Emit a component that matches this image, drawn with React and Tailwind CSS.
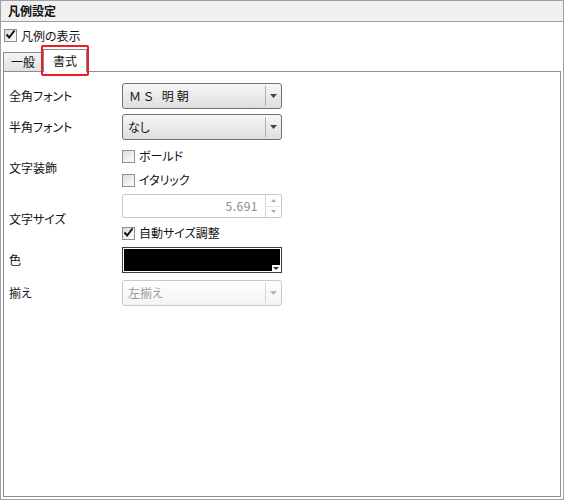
import React from 'react';

const Arrow = ({ color = '#444' }) => (
  <svg width="7" height="4" viewBox="0 0 7 4"><path d="M0 0H7L3.5 4Z" fill={color} /></svg>
);

const Check = ({ checked, label }) => (
  <div className="flex items-center h-[20px]">
    <span className="relative w-[13px] h-[13px] border border-[#8e8f8f] bg-linear-to-br from-[#dcdcdc] to-white flex items-center justify-center">
      {checked && (
        <svg width="11" height="11" viewBox="0 0 11 11" className="absolute -top-px left-0">
          <path d="M1.5 5.5L4.2 8.5L9.5 1.5" fill="none" stroke="#111" strokeWidth="2" />
        </svg>
      )}
    </span>
    <span className="ml-[4px]">{label}</span>
  </div>
);

const Select = ({ value, disabled, wide }) => (
  <div className={`w-[160px] h-[26px] rounded-[3px] border flex bg-linear-to-b ${disabled ? 'border-[#c9c9c9] from-white to-[#f4f4f4] text-[#9a9a9a]' : 'border-[#707070] from-[#f7f7f7] to-[#dedede]'}`}>
    <div className={`flex-1 flex items-center pl-[5px] ${wide ? 'tracking-[3px] pl-[6px]' : ''}`}>{value}</div>
    <div className={`w-[16px] my-[2px] border-l flex items-center justify-center ${disabled ? 'border-[#d6d6d6]' : 'border-[#b0b0b0]'}`}>
      <Arrow color={disabled ? '#b5b5b5' : '#444'} />
    </div>
  </div>
);

const Row = ({ label, children, className = '' }) => (
  <div className={`flex items-center ${className}`}>
    <div className="w-[113px]">{label}</div>
    <div>{children}</div>
  </div>
);

export default function App() {
  return (
    <div className="w-[564px] h-[500px] flex flex-col border border-[#a0a0a0] bg-white text-[12px] text-[#111] font-['Noto_Sans_CJK_JP',sans-serif] [font-feature-settings:'palt']">
      <div className="h-[21px] shrink-0 bg-[#f0f0f0] border-b border-[#a0a0a0] pl-[7px] font-bold leading-[20px]">凡例設定</div>

      <div className="h-[27px] shrink-0 flex items-center pl-[3px]">
        <Check checked label="凡例の表示" />
      </div>

      <div className="h-[22px] shrink-0 flex items-end pl-[2px]">
        <div className="w-[40px] h-[19px] border border-b-0 border-[#898c95] bg-linear-to-b from-[#f3f3f3] to-[#e3e3e3] flex items-center justify-center">一般</div>
        <div className="relative z-10 w-[44px] h-[23px] -mb-px border border-b-0 border-[#898c95] bg-white flex items-center justify-center">
          書式
          <div className="absolute -left-[3px] -top-[5px] w-[48px] h-[31px] border-2 border-[#ee1c24] rounded-[2px]" />
        </div>
      </div>

      <div className="flex-1 mx-[2px] mb-[2px] border border-[#898c95] pl-[5px]">
        <Row label="全角フォント" className="mt-[11px]">
          <Select value="ＭＳ 明朝" wide />
        </Row>
        <Row label="半角フォント" className="mt-[5px]">
          <Select value="なし" />
        </Row>
        <Row label="文字装飾" className="mt-[6px]">
          <div className="flex flex-col gap-[4px]">
            <Check label="ボールド" />
            <Check label="イタリック" />
          </div>
        </Row>
        <Row label="文字サイズ" className="mt-[4px]">
          <div className="flex flex-col">
            <div className="w-[160px] h-[24px] border border-[#c8c8c8] rounded-[2px] flex bg-white">
              <div className="flex-1 flex items-center justify-end pr-[7px] text-[#8a8a8a] tracking-[0.5px]">5.691</div>
              <div className="w-[16px] border-l border-[#d4d4d4] flex flex-col">
                <div className="flex-1 flex items-center justify-center border-b border-[#e2e2e2]">
                  <svg width="5" height="3" viewBox="0 0 5 3"><path d="M0 3H5L2.5 0Z" fill="#a8a8a8" /></svg>
                </div>
                <div className="flex-1 flex items-center justify-center">
                  <svg width="5" height="3" viewBox="0 0 5 3"><path d="M0 0H5L2.5 3Z" fill="#a8a8a8" /></svg>
                </div>
              </div>
            </div>
            <div className="mt-[5px]">
              <Check checked label="自動サイズ調整" />
            </div>
          </div>
        </Row>
        <Row label="色" className="mt-[4px]">
          <div className="w-[160px] h-[26px] border border-[#3c3c3c] p-px bg-white">
            <div className="relative w-full h-full bg-black">
              <div className="absolute right-0 bottom-0 w-[8px] h-[6px] bg-white flex items-center justify-center">
                <svg width="6" height="3" viewBox="0 0 6 3"><path d="M0 0H6L3 3Z" fill="#333" /></svg>
              </div>
            </div>
          </div>
        </Row>
        <Row label="揃え" className="mt-[7px]">
          <Select value="左揃え" disabled />
        </Row>
      </div>
    </div>
  );
}
